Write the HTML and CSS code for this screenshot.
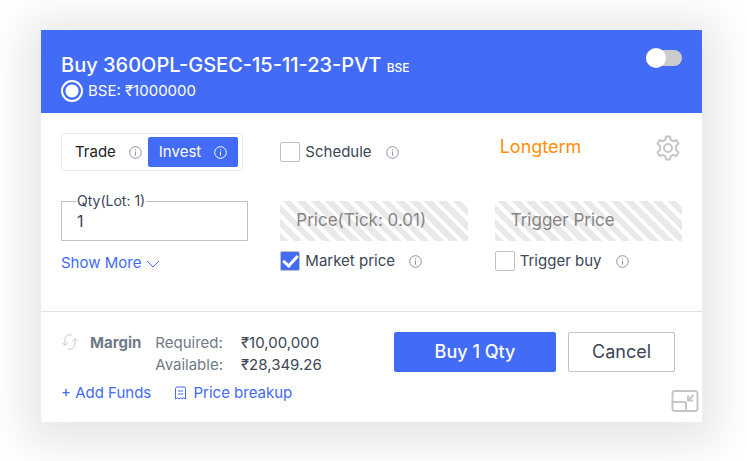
FILE: index.html
```html
<!DOCTYPE html>
<html lang="en">
<head>
  <meta charset="utf-8">
  <title>Buy Order</title>
  <link rel="stylesheet" href="styles.css">
</head>
<body>
  <svg class="defs" aria-hidden="true">
    <symbol id="info" viewBox="0 0 13 13">
      <circle cx="6.5" cy="6.5" r="5.8" />
      <path d="M6.5 5.5V9.5M6.5 3.3V4.3" />
    </symbol>
  </svg>

  <form class="order">
    <header class="order-header">
      <div>
        <h1>Buy 360OPL-GSEC-15-11-23-PVT <small>BSE</small></h1>
        <label class="exchange">
          <input type="radio" class="radio" name="exchange" checked>
          BSE: ₹1000000
        </label>
      </div>
      <input type="checkbox" class="switch" role="switch" aria-label="Buy or sell">
    </header>

    <div class="order-body">
      <div class="col">
        <div class="top-row">
          <div class="tabs">
            <button type="button" class="tab">Trade <svg class="info"><use href="#info" /></svg></button>
            <button type="button" class="tab active">Invest <svg class="info"><use href="#info" /></svg></button>
          </div>
        </div>
        <div class="field">
          <label class="field-label" for="qty">Qty(Lot: 1)</label>
          <input type="text" class="text" id="qty" value="1">
        </div>
        <div class="option">
          <a href="#" class="link">Show More
            <svg class="chevron" viewBox="0 0 14 8"><path d="M1 1l6 6 6-6" /></svg>
          </a>
        </div>
      </div>

      <div class="col">
        <div class="top-row">
          <label class="check"><input type="checkbox" class="box"> Schedule</label>
          <svg class="info"><use href="#info" /></svg>
        </div>
        <div class="field">
          <input type="text" class="text" placeholder="Price(Tick: 0.01)" aria-label="Price" disabled>
        </div>
        <div class="option">
          <label class="check"><input type="checkbox" class="box" checked> Market price</label>
          <svg class="info"><use href="#info" /></svg>
        </div>
      </div>

      <div class="col">
        <div class="top-row">
          <span class="term">Longterm</span>
          <button type="button" class="icon-btn settings" aria-label="Settings">
            <svg width="24" height="26" viewBox="0 0 24 26">
              <path stroke-linejoin="round" d="M10 1.5h4l.8 3.4 2.2 1.3 3.3-1.2 2.2 3.6-2.6 2.5v3.8l2.6 2.5-2.2 3.6-3.3-1.2-2.2 1.3-.8 3.4h-4l-.8-3.4-2.2-1.3L3.700 21l-2.200-3.600 2.600-2.500v-3.800L1.500 8.600 3.700 5l3.300 1.200 2.200-1.300z" />
              <circle cx="12" cy="13" r="4" />
            </svg>
          </button>
        </div>
        <div class="field">
          <input type="text" class="text" placeholder="Trigger Price" aria-label="Trigger price" disabled>
        </div>
        <div class="option">
          <label class="check"><input type="checkbox" class="box"> Trigger buy</label>
          <svg class="info"><use href="#info" /></svg>
        </div>
      </div>
    </div>

    <footer class="order-footer">
      <div>
        <div class="margin">
          <button type="button" class="icon-btn refresh" aria-label="Refresh margin">
            <svg width="18" height="18" viewBox="0 0 18 18">
              <path d="M11 2.500C7.500 .5 4 3 4 7V12M1 9.500L4 12.500 7 9.500M7 15.500c3.500 2 7-.5 7-4.500V6M11 8.500L14 5.500 17 8.500" />
            </svg>
          </button>
          <strong>Margin</strong>
          <dl>
            <dt>Required:</dt><dd>₹10,00,000</dd>
            <dt>Available:</dt><dd>₹28,349.26</dd>
          </dl>
        </div>
        <div class="links">
          <a href="#" class="link">+ Add Funds</a>
          <a href="#" class="link">
            <svg class="bill" viewBox="0 0 13 14"><path d="M1.500 13V2.500a1.500 1.500 0 0 1 1.500-1.500H10a1.500 1.500 0 0 1 1.500 1.500V13l-2-1.200-1.500 1.200-1.500-1.200L5 13l-1.500-1.200zM4 5H9M4 8H9" /></svg>
            Price breakup
          </a>
        </div>
      </div>
      <div class="actions">
        <button type="submit" class="btn btn-buy">Buy 1 Qty</button>
        <button type="button" class="btn btn-cancel">Cancel</button>
      </div>
    </footer>

    <button type="button" class="icon-btn minimize" aria-label="Minimize">
      <svg width="28" height="22" viewBox="0 0 28 22">
        <rect x="1.500" y="1" width="25" height="20" rx="2.500" />
        <path d="M1.500 12H13a2 2 0 0 1 2 2V21M22.500 5L17.500 10M17 5.500V10.500H22" />
      </svg>
    </button>
  </form>
</body>
</html>
```
FILE: styles.css
```css
* {
  box-sizing: border-box;
}

body {
  margin: 0;
  padding: 30px 45px 39px 41px;
  color: #3b4656;
  font-family: Inter, "Open Sans", sans-serif;
  font-size: 15px;
  line-height: 22px;
}

input,
button {
  font: inherit;
  color: inherit;
  margin: 0;
}

svg {
  fill: none;
  stroke: currentColor;
  flex: none;
}

.defs {
  position: absolute;
  width: 0;
  height: 0;
}

.order {
  position: relative;
  background: #fff;
  border-radius: 2px;
  box-shadow: 0 6px 44px 16px rgba(0, 0, 0, 0.1);
}

/* header */
.order-header {
  display: flex;
  justify-content: space-between;
  align-items: flex-start;
  padding: 20px 20px 11px;
  background: #426bf6;
  color: #fff;
}

h1 {
  margin: 0;
  font-size: 20px;
  font-weight: 500;
  line-height: 30px;
}

h1 small {
  font-size: 12px;
  line-height: 12px;
}

.exchange {
  display: flex;
  align-items: center;
  gap: 5px;
}

.radio {
  appearance: none;
  width: 22px;
  height: 22px;
  border: 2px solid #fff;
  border-radius: 50%;
  background: radial-gradient(circle, #fff 6px, transparent 7px);
}

.switch {
  appearance: none;
  width: 36px;
  height: 16px;
  border-radius: 8px;
  background: #ccc;
}

.switch::before {
  content: "";
  display: block;
  width: 20px;
  height: 20px;
  margin-top: -2px;
  border-radius: 50%;
  background: #fff;
}

/* body */
.order-body {
  display: flex;
  gap: 27px;
  padding: 20px 20px 38px;
}

.col {
  flex: 1;
  min-width: 0;
}

.col:first-child {
  margin-right: 5px;
}

.top-row,
.option,
.check {
  display: flex;
  align-items: center;
}

.top-row {
  height: 38px;
  margin-bottom: 30px;
}

.option {
  height: 24px;
  margin-top: 8px;
}

.option .link {
  padding-top: 4px;
}

.tabs {
  display: flex;
  padding: 3px 4px;
  border: 1px solid #e8e8e8;
  border-radius: 2px;
}

.tab {
  display: flex;
  align-items: center;
  gap: 13px;
  height: 30px;
  padding: 0 6px 0 9px;
  border: 0;
  border-radius: 2px;
  background: none;
  color: #222;
}

.tab.active {
  padding: 0 11px;
  background: #426bf6;
  color: #fff;
}

.info {
  width: 13px;
  height: 13px;
  color: #8a94a3;
}

.tab.active .info {
  color: #fff;
}

.check {
  gap: 5px;
  margin-right: 14px;
}

.box {
  appearance: none;
  display: grid;
  place-content: center;
  width: 20px;
  height: 20px;
  border: 1px solid #c2c2c2;
  border-radius: 2px;
}

.box:checked {
  background: #426bf6;
}

.box:checked::before {
  content: "";
  width: 6px;
  height: 12px;
  margin-bottom: 4px;
  border: solid #fff;
  border-width: 0 3px 3px 0;
  transform: rotate(42deg);
}

.field {
  position: relative;
}

.field-label {
  position: absolute;
  top: -8px;
  left: 15px;
  padding: 0 1px;
  background: #fff;
  font-size: 14px;
  line-height: 16px;
}

.text {
  display: block;
  width: 100%;
  height: 40px;
  padding: 0 15px;
  border: 1px solid #c2c2c2;
  font-size: 16px;
}

.text:disabled {
  border: 0;
  padding: 0 16px 3px;
  background: repeating-linear-gradient(45deg, #e9e9e9 0 6px, #fff 6px 10px);
  font-size: 17px;
}

.text::placeholder {
  color: #858585;
}

.link {
  color: #426bf6;
  text-decoration: none;
}

.chevron {
  width: 14px;
  height: 8px;
}

.term {
  color: #ff8f0a;
  font-size: 18px;
  padding: 0 5px 10px;
}

.icon-btn {
  display: flex;
  padding: 0;
  border: 0;
  background: none;
  color: #c6c6c6;
}

.settings {
  margin: -8px 2px 0 auto;
  stroke-width: 2px;
}

/* footer */
.order-footer {
  display: flex;
  justify-content: space-between;
  align-items: flex-start;
  padding: 20px 27px 18px 20px;
  border-top: 1px solid #e2e2e2;
}

.margin {
  display: flex;
  align-items: flex-start;
  color: #6f7a87;
}

.refresh {
  margin: 1px 11px 0 0;
}

dl {
  display: grid;
  grid-template-columns: auto auto;
  column-gap: 18px;
  margin: 0 0 0 14px;
}

dd {
  margin: 0;
  color: #3b4656;
}

.links {
  display: flex;
  gap: 23px;
  margin-top: 6px;
}

.bill {
  width: 13px;
  height: 14px;
  margin-right: 2px;
  vertical-align: -2px;
}

.actions {
  display: flex;
  gap: 12px;
}

.btn {
  height: 40px;
  padding: 0 20px;
  border: 1px solid #c2c2c2;
  border-radius: 2px;
  background: #fff;
  font-size: 18px;
}

.btn-buy {
  width: 162px;
  border-color: #426bf6;
  background: #426bf6;
  color: #fff;
  font-weight: 500;
}

.btn-cancel {
  width: 107px;
}

.minimize {
  position: absolute;
  right: 3px;
  bottom: 10px;
  stroke-width: 2px;
}
```
